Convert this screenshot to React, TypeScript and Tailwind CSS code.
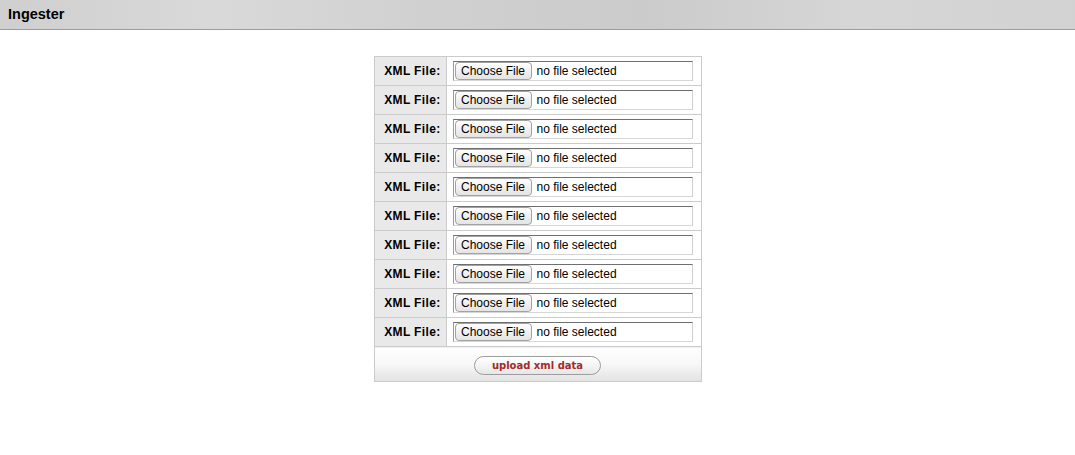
import React from 'react'

const rows = Array.from({ length: 10 }, (_, i) => i)

const FileField = () => (
  <div className="flex h-[20px] w-[240px] items-center border border-t-[#6f6f6f] border-l-[#9a9a9a] border-r-[#cfcfcf] border-b-[#d6d6d6] bg-white pl-[1px]">
    <span className="flex h-[18px] w-[77px] items-center justify-center rounded-[4px] border border-[#a2a2a2] bg-[linear-gradient(180deg,#ffffff,#f0f0f0_50%,#e4e4e4)] text-[12px] text-black">
      Choose File
    </span>
    <span className="ml-[5px] text-[12px] text-black">no file selected</span>
  </div>
)

const App = () => {
  return (
    <div className="min-h-screen bg-white font-['Liberation_Sans',Arial,sans-serif]">
      <header className="flex h-[30px] items-center border-b border-[#9c9c9c] bg-[linear-gradient(90deg,#cfcfcf,#d9d9d9_20%,#d0d0d0_40%,#cbcbcb_60%,#d6d6d6_80%,#d2d2d2)] px-2">
        <h1 className="text-[14.5px] font-bold text-black">Ingester</h1>
      </header>

      <div className="mt-[26px] flex justify-center">
        <table className="w-[328px] border-collapse border border-[#a9a9a9]">
          <tbody>
            {rows.map((i) => (
              <tr key={i} className="h-[29px]">
                <td className="w-[72px] border border-[#cbcbcb] bg-[#e9e9e9] pr-[5px] text-right text-[12px] font-bold tracking-[0.35px] text-black">
                  XML File:
                </td>
                <td className="border border-[#cbcbcb] pl-[6px]">
                  <FileField />
                </td>
              </tr>
            ))}
            <tr className="h-[35px]">
              <td colSpan={2} className="border border-[#cbcbcb] bg-[linear-gradient(180deg,#ffffff,#f7f7f7_50%,#e2e2e2)] text-center">
                <button className="inline-flex h-[19px] w-[127px] items-center justify-center rounded-full border border-[#9d9d9d] bg-[linear-gradient(180deg,#ffffff,#f2f2f2_60%,#e6e6e6)] font-['DejaVu_Sans',sans-serif] text-[10px] font-bold text-[#a52a2a]">
                  upload xml data
                </button>
              </td>
            </tr>
          </tbody>
        </table>
      </div>
    </div>
  )
}

export default App
